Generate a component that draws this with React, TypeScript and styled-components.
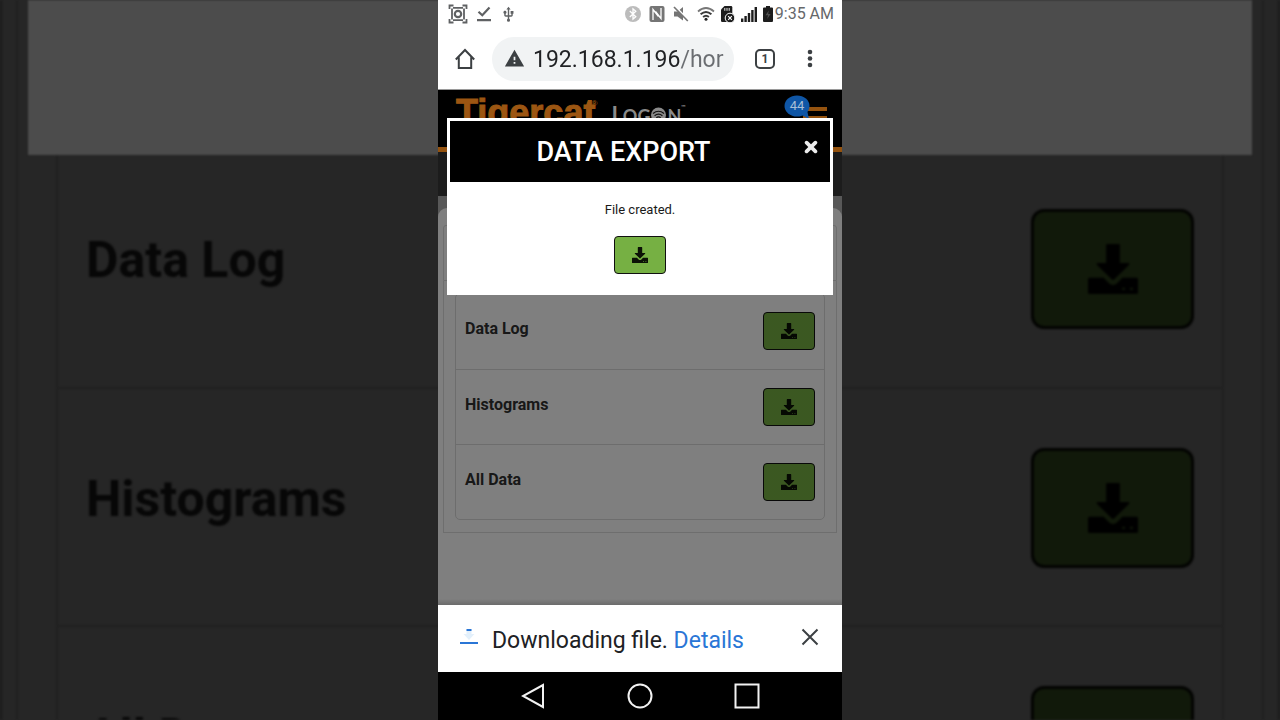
import React from "react";
import styled, { createGlobalStyle } from "styled-components";
import { MdUsb, MdWarning } from "react-icons/md";

const GlobalStyle = createGlobalStyle`
  * { box-sizing: border-box; }
  body {
    margin: 0;
    background: #262626;
    font-family: Roboto, "Liberation Sans", sans-serif;
  }
  button { font-family: inherit; }
`;

const Stage = styled.main`
  position: relative;
  min-height: 100vh;
  display: flex;
  justify-content: center;
  overflow: hidden;
`;

/* ---------- enlarged, dimmed copy of the page behind the phone ---------- */

const Backdrop = styled.div`
  position: absolute;
  inset: 0;
  overflow: hidden;
  padding: 0 14px;
  border: solid #1c1c1c;
  border-width: 0 2px;
  filter: blur(1px);
`;

const BackdropCard = styled.div`
  min-height: 100%;
  border: solid #212121;
  border-width: 0 2px;
`;

const BackdropDialog = styled.div`
  height: 155px;
  margin: 0 10px;
  background: #4c4c4c;
`;

const BackdropList = styled.div`
  margin: 0 38px;
  border: solid #212121;
  border-width: 0 2px;
`;

const BackdropRow = styled.div<{ $first?: boolean }>`
  display: flex;
  justify-content: space-between;
  align-items: flex-start;
  height: ${(p) => (p.$first ? 234 : 238)}px;
  padding: ${(p) => (p.$first ? 54 : 59)}px 28px 0;
  border-bottom: 2px solid #212121;
  color: #070707;
  font-size: 50px;
  font-weight: 700;
  line-height: 102px;
`;

/* ------------------------------- phone ---------------------------------- */

const Phone = styled.div`
  position: relative;
  display: flex;
  flex-direction: column;
  width: 100%;
  max-width: 404px;
  min-height: 100vh;
  background: #fff;
`;

const StatusBar = styled.div`
  display: flex;
  align-items: center;
  justify-content: space-between;
  height: 28px;
  padding: 0 8px 0 10px;
  color: #5f6163;
`;

const StatusGroup = styled.div<{ $gap: number }>`
  display: flex;
  align-items: center;
  gap: ${(p) => p.$gap}px;
`;

const Clock = styled.span`
  margin-left: -4px;
  font-size: 16px;
  line-height: 28px;
  color: #66686a;
`;

const BrowserBar = styled.div`
  display: flex;
  align-items: center;
  height: 62px;
  padding: 0 19px 0 14px;
  border-bottom: 1px solid #9a9a9a;
`;

const IconButton = styled.button`
  display: flex;
  align-items: center;
  justify-content: center;
  flex: none;
  width: 26px;
  height: 32px;
  padding: 0;
  border: 0;
  background: none;
  color: #3c4043;
`;

const AddressPill = styled.label`
  display: flex;
  align-items: center;
  gap: 8px;
  flex: 1;
  min-width: 0;
  height: 44px;
  margin: 0 18px 0 14px;
  padding: 0 8px 0 12px;
  border-radius: 22px;
  background: #f1f3f4;
  color: #3c4043;
`;

const AddressInput = styled.input`
  flex: 1;
  min-width: 0;
  padding: 2px 0 0;
  border: 0;
  outline: 0;
  font: 23px/32px Roboto, "Liberation Sans", sans-serif;
  color: transparent;
  background: linear-gradient(to right, #202124 147px, #6a6d71 147px);
  background-clip: text;
`;

const ToolbarEnd = styled.div`
  display: flex;
  gap: 19px;
`;

/* ----------------------------- web page --------------------------------- */

const WebView = styled.section`
  position: relative;
  display: flex;
  flex-direction: column;
  flex: 1;
  background: #b0b0b0;
`;

const SiteHeader = styled.header`
  position: relative;
  z-index: 1;
  display: flex;
  align-items: flex-start;
  height: 62px;
  padding: 5px 15px 0 18px;
  border-bottom: 5px solid #95530f;
  background: #000;
`;

const Brand = styled.span`
  display: flex;
  font: 700 36px/36px "Liberation Sans", Arial, sans-serif;
  color: #9c5612;
  -webkit-text-stroke: 1px #9c5612;
`;

const Registered = styled.sup`
  width: 6px;
  margin: 5px 0 0 -4px;
  font-size: 8px;
  line-height: 8px;
  -webkit-text-stroke: 0;
`;

const SubBrand = styled.span`
  display: flex;
  align-items: baseline;
  margin: 8px 0 0 14px;
  font: 700 18px/24px Lato, sans-serif;
  color: #8a8a8a;
`;

const SubBrandInitial = styled.span`
  font-size: 22px;
`;

const Trademark = styled.sup`
  align-self: flex-start;
  font-size: 6px;
  line-height: 8px;
`;

const MenuButton = styled.button`
  position: relative;
  width: 24px;
  height: 26px;
  margin: 12px 0 0 auto;
  padding: 0;
  border: solid #95530f;
  border-width: 4px 0;
  background: linear-gradient(#95530f, #95530f) 0 5px / 100% 4px no-repeat;
`;

const Badge = styled.span`
  position: absolute;
  top: -16px;
  left: -19px;
  width: 26px;
  height: 23px;
`;

const BadgeShape = styled.svg`
  display: block;
`;

const BadgeCount = styled.span`
  position: absolute;
  inset: 0;
  font: 13px/22px Roboto, sans-serif;
  text-align: center;
  color: #a9bfd6;
`;

const SubNav = styled.div`
  height: 44px;
  background: #383838;
`;

const Panel = styled.div`
  flex: 1;
  margin-top: 12px;
  padding: 17px 5px;
  border-radius: 9px 9px 0 0;
  background: #fff;
`;

const CardHeading = styled.div`
  height: 56px;
  border: 1px solid #dcdcdc;
  border-radius: 3px 3px 0 0;
`;

const CardBody = styled.div`
  padding: 12px 11px;
  border: 1px solid #dcdcdc;
  border-top: 0;
`;

const List = styled.ul`
  margin: 0;
  padding: 0;
  list-style: none;
  border: 1px solid #dadada;
  border-radius: 5px;
`;

const ListRow = styled.li`
  display: flex;
  justify-content: space-between;
  align-items: flex-start;
  height: 75px;
  padding: 18px 9px 0;
  font-size: 16px;
  font-weight: 700;
  line-height: 34px;
  color: #303030;

  & + & {
    border-top: 1px solid #dadada;
  }
`;

const DownloadButton = styled.button<{ $large?: boolean }>`
  display: flex;
  align-items: center;
  justify-content: center;
  width: ${(p) => (p.$large ? 163 : 52)}px;
  height: ${(p) => (p.$large ? 120 : 38)}px;
  padding: 0;
  border: ${(p) => (p.$large ? "3px solid #030402" : "1px solid #101010")};
  border-radius: ${(p) => (p.$large ? 13 : 4)}px;
  background: ${(p) => (p.$large ? "#11190a" : "#76b043")};
  color: ${(p) => (p.$large ? "#000" : "#0b1206")};
`;

const Scrim = styled.div`
  position: absolute;
  inset: 0;
  background: linear-gradient(to top, rgba(0, 0, 0, 0.58), rgba(0, 0, 0, 0.5) 6px);
`;

const Dialog = styled.div`
  position: absolute;
  z-index: 2;
  top: 28px;
  left: 9px;
  right: 9px;
  display: flex;
  flex-direction: column;
  align-items: center;
  padding: 3px 3px 21px;
  background: #fff;
`;

const DialogHeader = styled.div`
  display: flex;
  align-items: flex-start;
  width: 100%;
  height: 61px;
  padding: 0 12px 0 0;
  background: #000;
  color: #fff;
`;

const DialogTitle = styled.h1`
  flex: 1;
  margin: 0;
  padding-right: 7px;
  font-size: 27px;
  font-weight: 500;
  line-height: 62px;
  text-align: center;
`;

const DialogClose = styled.button`
  width: 14px;
  height: 14px;
  margin-top: 19px;
  padding: 0;
  border: 0;
  background: none;
  color: #ececec;
`;

const DialogText = styled.p`
  margin: 19px 0 17px;
  font-size: 13px;
  line-height: 18px;
  color: #1a1a1a;
`;

/* --------------------------- bottom of phone ---------------------------- */

const InfoBar = styled.div`
  display: flex;
  align-items: center;
  height: 67px;
  padding: 0 19px 4px 21px;
  font-size: 23px;
  line-height: 32px;
  color: #202124;
`;

const InfoText = styled.span`
  flex: 1;
  padding: 8px 0 0 13px;
  white-space: nowrap;
`;

const DetailsLink = styled.a`
  color: #2a76d6;
  text-decoration: none;
`;

const NavBar = styled.nav`
  display: flex;
  align-items: center;
  justify-content: center;
  gap: 81px;
  height: 48px;
  background: #000;
`;

const NavButton = styled(IconButton)`
  color: #f2f2f2;
`;

/* ------------------------------- icons ---------------------------------- */

const DownloadIcon = ({ size = 16 }: { size?: number }) => (
  <svg width={size} height={size} viewBox="0 0 16 16" fill="currentColor" aria-hidden="true">
    <path d="M6.2 0h3.6q.4 0 .4.4v5.700h2.700q.6 0 .2.6L8.400 11.300q-.4.4-.8 0L2.900 6.700q-.4-.6.2-.6h2.700V.4q0-.4.4-.4z" />
    <path
      fillRule="evenodd"
      d="M.5 10.800h4.500l1.600 1.700q1.400 1.200 2.800 0l1.600-1.700h4.500q.5 0 .5.500v4.200q0 .5-.5.500H.5q-.5 0-.5-.5v-4.200q0-.5.5-.5zM11 14v.7h.8V14zm2.500 0v.7h.8V14z"
    />
  </svg>
);

const CaptureIcon = () => (
  <svg width="20" height="20" viewBox="0 0 20 20" fill="none" stroke="currentColor" strokeWidth="1.800" aria-hidden="true">
    <path d="M1.500 5V1.500h4M14.500 1.500h4V5M18.500 15v3.500h-4M5.500 18.500h-4V15M5 3.800h10M5 16.200h10M4 4.500v11M16 4.500v11" />
    <circle cx="10" cy="10" r="3.200" strokeWidth="2.200" />
  </svg>
);

const CheckIcon = () => (
  <svg width="14" height="18" viewBox="0 0 14 18" fill="none" stroke="currentColor" strokeWidth="2.200" aria-hidden="true">
    <path d="M1.500 6.700l3.800 3.600L12.500 2.500M0 15.200h14" />
  </svg>
);

const BluetoothIcon = () => (
  <svg width="16" height="16" viewBox="0 0 16 16" aria-hidden="true">
    <circle cx="8" cy="8" r="8" fill="#bcbcbc" />
    <path d="M4.800 5l6 5.800L8 13.200V2.800l2.800 2.400-6 5.800" fill="none" stroke="#fff" strokeWidth="1.300" />
  </svg>
);

const NfcIcon = () => (
  <svg width="16" height="16" viewBox="0 0 16 16" aria-hidden="true">
    <rect x=".5" width="15" height="16" rx="2" fill="#757575" />
    <path d="M4 14V3.500l5.500 7M12 2v10.500l-5.500-7" fill="none" stroke="#fff" strokeWidth="1.300" />
  </svg>
);

const MuteIcon = () => (
  <svg width="16" height="16" viewBox="0 0 16 16" aria-hidden="true">
    <path d="M1 5.500h3.500L10 1v13.500L4.500 10.500H1z" fill="#757575" />
    <path d="M2 .5l13.500 14" stroke="#fff" strokeWidth="2.200" />
    <path d="M1 1l13.800 14" stroke="#757575" strokeWidth="1.700" />
  </svg>
);

const WifiIcon = () => (
  <svg width="18" height="16" viewBox="0 0 18 16" fill="none" stroke="#3a3a3a" aria-hidden="true">
    <path d="M1 5.500Q9-1.500 17 5.500" strokeWidth="1.700" stroke="#777" />
    <path d="M3.600 8.300q5.400-4.700 10.800 0M6.100 11q2.900-2.500 5.800 0" strokeWidth="1.900" />
    <circle cx="9" cy="13.200" r="1.500" fill="#222" stroke="none" />
  </svg>
);

const SimIcon = () => (
  <svg width="14" height="17" viewBox="0 0 14 17" aria-hidden="true">
    <path d="M3.500 0H10q1.300 0 1.300 1.300V16H1.200Q0 16 0 14.800V3.500z" fill="#1d1d1d" />
    <path d="M3.800 2v2.800M6 2v2.800M8.200 2v2.800" stroke="#fff" strokeWidth=".9" />
    <circle cx="9" cy="12" r="4.800" fill="#1d1d1d" stroke="#fff" strokeWidth="1" />
    <path d="M7.200 10.200l3.600 3.600m0-3.600l-3.600 3.600" stroke="#fff" strokeWidth="1.200" />
  </svg>
);

const SignalIcon = () => (
  <svg width="16" height="16" viewBox="0 0 16 16" fill="#1d1d1d" aria-hidden="true">
    <path d="M0 12.500h2.400V16H0zM3.400 10h2.400v6H3.400zM6.800 7h2.400v9H6.800zM10.200 4h2.400v12h-2.400zM13.600 1H16v15h-2.400z" />
  </svg>
);

const BatteryIcon = () => (
  <svg width="10" height="16" viewBox="0 0 10 16" aria-hidden="true">
    <path d="M3 0h4v1.500h2q1 0 1 1V15q0 1-1 1H1q-1 0-1-1V2.500q0-1 1-1h2z" fill="#1d1d1d" />
    <path d="M5.800 4.500L2.500 9.300H5l-.8 3.600 3.400-4.900H5.200z" fill="#505050" />
  </svg>
);

const HomeIcon = () => (
  <svg width="20" height="22" viewBox="0 0 20 22" fill="none" stroke="currentColor" strokeWidth="2" aria-hidden="true">
    <path d="M.8 11.500L10 2l9.200 9.500M3.800 9.200V20h12.400V9.200" />
  </svg>
);

const TabsIcon = () => (
  <svg width="22" height="22" viewBox="0 0 22 22" fill="none" stroke="currentColor" strokeWidth="2" aria-hidden="true">
    <rect x="2" y="2" width="18" height="18" rx="4" />
    <text x="11" y="15" textAnchor="middle" fontSize="12" fontWeight="700" fontFamily="Roboto, sans-serif" fill="currentColor" stroke="none">1</text>
  </svg>
);

const MoreIcon = () => (
  <svg width="6" height="20" viewBox="0 0 6 20" fill="currentColor" aria-hidden="true">
    <circle cx="3" cy="3" r="2.300" />
    <circle cx="3" cy="9.500" r="2.300" />
    <circle cx="3" cy="16" r="2.300" />
  </svg>
);

const SignalO = () => (
  <svg width="17" height="16" viewBox="0 0 17 16" fill="none" aria-hidden="true">
    <circle cx="8.500" cy="8" r="7.500" fill="#8a8a8a" />
    <path d="M3 6.500q5.500-4.500 11 0M4.600 8.700q3.900-3.200 7.800 0M6.300 10.800q2.200-1.700 4.400 0" stroke="#111" strokeWidth="1.200" />
    <circle cx="8.500" cy="12.500" r="1" fill="#111" />
  </svg>
);

const DownloadingIcon = () => (
  <svg width="20" height="20" viewBox="0 0 20 20" aria-hidden="true">
    <path d="M7.500 2h5v5h3L10 13 4.500 7h3z" fill="#e3f0fb" />
    <path d="M7.500 2h5v2h-5z" fill="#2a76d6" />
    <path d="M1 15h18v2H1z" fill="#2a76d6" />
  </svg>
);

const items = ["Data Log", "Histograms", "All Data"];

export default function App() {
  return (
    <Stage>
      <GlobalStyle />
      <Backdrop aria-hidden="true">
        <BackdropCard>
          <BackdropDialog />
          <BackdropList>
            {items.map((name, i) => (
              <BackdropRow key={name} $first={i === 0}>
                {name}
                <DownloadButton $large tabIndex={-1}>
                  <DownloadIcon size={50} />
                </DownloadButton>
              </BackdropRow>
            ))}
          </BackdropList>
        </BackdropCard>
      </Backdrop>

      <Phone>
        <StatusBar>
          <StatusGroup $gap={9}>
            <CaptureIcon />
            <CheckIcon />
            <MdUsb size={17} />
          </StatusGroup>
          <StatusGroup $gap={6}>
            <StatusGroup $gap={8}>
              <BluetoothIcon />
              <NfcIcon />
              <MuteIcon />
              <WifiIcon />
            </StatusGroup>
            <SimIcon />
            <SignalIcon />
            <BatteryIcon />
            <Clock>9:35 AM</Clock>
          </StatusGroup>
        </StatusBar>

        <BrowserBar>
          <IconButton aria-label="Home">
            <HomeIcon />
          </IconButton>
          <AddressPill>
            <MdWarning size={21} />
            <AddressInput aria-label="Address" readOnly value="192.168.1.196/hor" />
          </AddressPill>
          <ToolbarEnd>
            <IconButton aria-label="Tabs">
              <TabsIcon />
            </IconButton>
            <IconButton aria-label="More options">
              <MoreIcon />
            </IconButton>
          </ToolbarEnd>
        </BrowserBar>

        <WebView>
          <SiteHeader>
            <Brand>
              Tigercat<Registered>®</Registered>
            </Brand>
            <SubBrand>
              <SubBrandInitial>L</SubBrandInitial>OG
              <SignalO />N<Trademark>™</Trademark>
            </SubBrand>
            <MenuButton aria-label="Menu">
              <Badge>
                <BadgeShape width="26" height="24" viewBox="0 0 26 24" aria-hidden="true">
                  <ellipse cx="13" cy="11" rx="12.500" ry="10.500" fill="#0f56a6" />
                  <path d="M16 19l9 5-2-9z" fill="#0f56a6" />
                </BadgeShape>
                <BadgeCount>44</BadgeCount>
              </Badge>
            </MenuButton>
          </SiteHeader>
          <SubNav />
          <Panel>
            <CardHeading />
            <CardBody>
              <List>
                {items.map((name) => (
                  <ListRow key={name}>
                    {name}
                    <DownloadButton aria-label={`Export ${name}`}>
                      <DownloadIcon />
                    </DownloadButton>
                  </ListRow>
                ))}
              </List>
            </CardBody>
          </Panel>
          <Scrim />
          <Dialog role="dialog" aria-labelledby="export-title">
            <DialogHeader>
              <DialogTitle id="export-title">DATA EXPORT</DialogTitle>
              <DialogClose aria-label="Close">
                <svg width="14" height="14" viewBox="0 0 14 14" stroke="currentColor" strokeWidth="3.700" strokeLinecap="round" aria-hidden="true">
                  <path d="M2.600 2.600l8.800 8.800M11.400 2.600l-8.800 8.800" />
                </svg>
              </DialogClose>
            </DialogHeader>
            <DialogText>File created.</DialogText>
            <DownloadButton aria-label="Download file">
              <DownloadIcon />
            </DownloadButton>
          </Dialog>
        </WebView>

        <InfoBar>
          <DownloadingIcon />
          <InfoText>
            Downloading file. <DetailsLink href="#details">Details</DetailsLink>
          </InfoText>
          <IconButton aria-label="Dismiss">
            <svg width="18" height="18" viewBox="0 0 18 18" stroke="currentColor" strokeWidth="2" aria-hidden="true">
              <path d="M1.500 1.500l15 15M16.500 1.500l-15 15" />
            </svg>
          </IconButton>
        </InfoBar>

        <NavBar>
          <NavButton aria-label="Back">
            <svg width="24" height="26" viewBox="0 0 24 26" fill="none" stroke="currentColor" strokeWidth="2" aria-hidden="true">
              <path d="M22 2v22L2 13z" />
            </svg>
          </NavButton>
          <NavButton aria-label="Home screen">
            <svg width="26" height="26" viewBox="0 0 26 26" fill="none" stroke="currentColor" strokeWidth="2" aria-hidden="true">
              <circle cx="13" cy="13" r="11.500" />
            </svg>
          </NavButton>
          <NavButton aria-label="Recent apps">
            <svg width="26" height="26" viewBox="0 0 26 26" fill="none" stroke="currentColor" strokeWidth="2" aria-hidden="true">
              <path d="M1.500 1.500h23v23h-23z" />
            </svg>
          </NavButton>
        </NavBar>
      </Phone>
    </Stage>
  );
}
